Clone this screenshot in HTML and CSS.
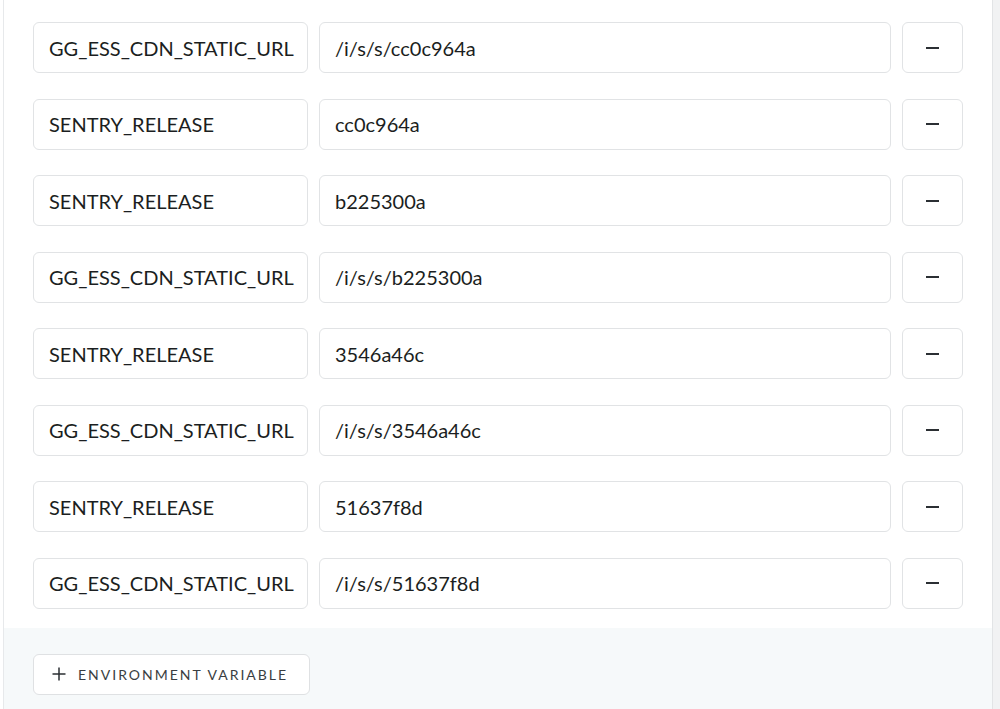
FILE: index.html
```html
<!DOCTYPE html>
<html>
<head>
<meta charset="utf-8">
<link rel="stylesheet" href="styles.css">
</head>
<body>
<div class="page">
  <div class="card">
    <div class="rows">
      <div class="row"><div class="field key">GG_ESS_CDN_STATIC_URL</div><div class="field val">/i/s/s/cc0c964a</div><button class="remove"><span class="dash"></span></button></div>
      <div class="row"><div class="field key">SENTRY_RELEASE</div><div class="field val">cc0c964a</div><button class="remove"><span class="dash"></span></button></div>
      <div class="row"><div class="field key">SENTRY_RELEASE</div><div class="field val">b225300a</div><button class="remove"><span class="dash"></span></button></div>
      <div class="row"><div class="field key">GG_ESS_CDN_STATIC_URL</div><div class="field val">/i/s/s/b225300a</div><button class="remove"><span class="dash"></span></button></div>
      <div class="row"><div class="field key">SENTRY_RELEASE</div><div class="field val">3546a46c</div><button class="remove"><span class="dash"></span></button></div>
      <div class="row"><div class="field key">GG_ESS_CDN_STATIC_URL</div><div class="field val">/i/s/s/3546a46c</div><button class="remove"><span class="dash"></span></button></div>
      <div class="row"><div class="field key">SENTRY_RELEASE</div><div class="field val">51637f8d</div><button class="remove"><span class="dash"></span></button></div>
      <div class="row"><div class="field key">GG_ESS_CDN_STATIC_URL</div><div class="field val">/i/s/s/51637f8d</div><button class="remove"><span class="dash"></span></button></div>
    </div>
    <div class="footer">
      <button class="add">
        <svg class="plus" width="14" height="14" viewBox="0 0 14 14"><path d="M7 0.5v13M0.5 7h13" stroke="#2b2f33" stroke-width="1.5" fill="none"/></svg>
        <span>ENVIRONMENT VARIABLE</span>
      </button>
    </div>
  </div>
  <div class="edge"></div>
</div>
</body>
</html>
```
FILE: styles.css
```css
html, body {
  margin: 0;
  padding: 0;
  background: #ffffff;
}
body {
  font-family: "Lato", "Liberation Sans", sans-serif;
  color: #1e2124;
}
.page {
  display: flex;
  height: 709px;
  overflow: hidden;
  padding-left: 3px;
}
.card {
  width: 988px;
  border-left: 1px solid #e7e9eb;
  border-right: 1px solid #e2e4e6;
  background: #ffffff;
  display: flex;
  flex-direction: column;
}
.edge {
  flex: 1;
  background: #f1f2f3;
}
.rows {
  padding: 22px 29px 19px 29px;
  display: flex;
  flex-direction: column;
  gap: 25.5px;
}
.row {
  display: flex;
  gap: 11px;
  height: 51px;
}
.field {
  box-sizing: border-box;
  height: 51px;
  border: 1.5px solid #e1e3e5;
  border-radius: 6px;
  display: flex;
  align-items: center;
  padding-left: 15px;
  font-size: 20px;
  color: #1b1e21;
  background: #fff;
}
.key { width: 275px; }
.val { width: 572px; }
.remove {
  box-sizing: border-box;
  width: 61px;
  height: 51px;
  border: 1.5px solid #e1e3e5;
  border-radius: 6px;
  background: #fff;
  display: flex;
  align-items: center;
  justify-content: center;
  padding: 0;
}
.dash {
  display: block;
  width: 13px;
  height: 2px;
  background: #2b2f33;
}
.footer {
  flex: 1;
  background: #f6f9fa;
  padding: 26px 29px 0 29px;
}
.add {
  box-sizing: border-box;
  width: 277px;
  height: 41px;
  border: 1.5px solid #dfe1e3;
  border-radius: 6px;
  background: #fff;
  display: flex;
  align-items: center;
  padding: 0 0 0 18px;
  gap: 12px;
  font-family: "Lato", "Liberation Sans", sans-serif;
  font-size: 14px;
  letter-spacing: 2px;
  color: #3a3e42;
}
.plus { flex: none; }
```
